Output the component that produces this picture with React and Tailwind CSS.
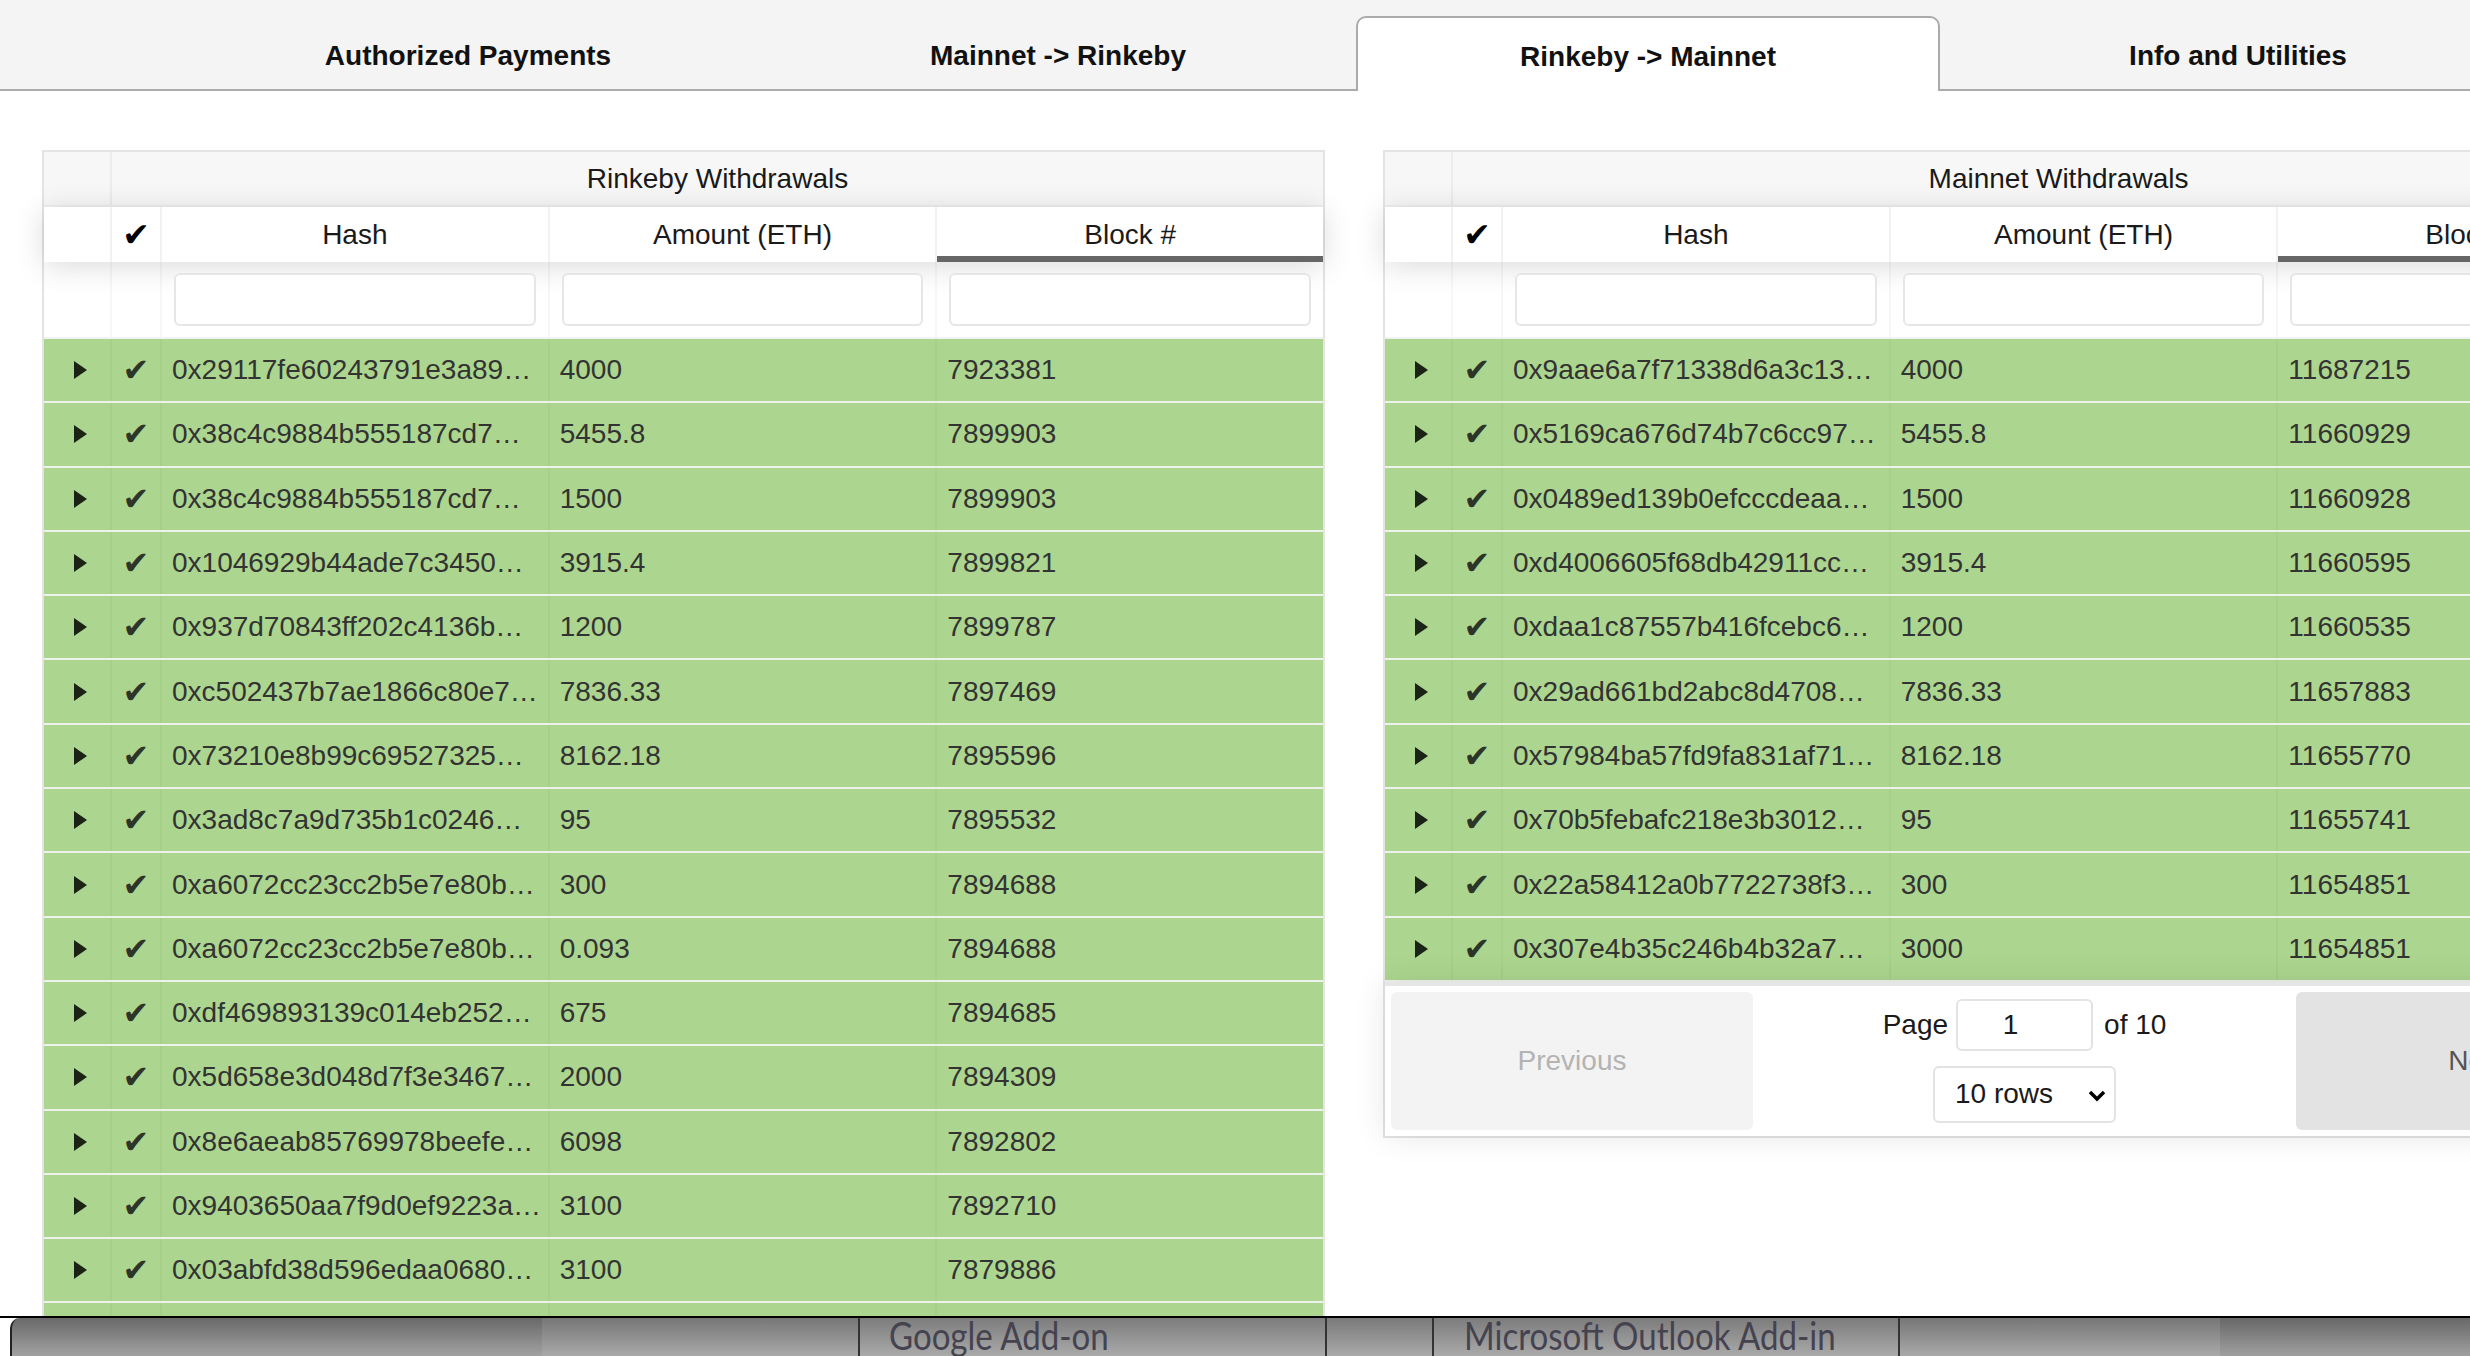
import { useState } from 'react';

const TABS = ['Authorized Payments', 'Mainnet -> Rinkeby', 'Rinkeby -> Mainnet', 'Info and Utilities'];

const rinkebyRows = [
  ['0x29117fe60243791e3a89…', '4000', '7923381'],
  ['0x38c4c9884b555187cd7…', '5455.8', '7899903'],
  ['0x38c4c9884b555187cd7…', '1500', '7899903'],
  ['0x1046929b44ade7c3450…', '3915.4', '7899821'],
  ['0x937d70843ff202c4136b…', '1200', '7899787'],
  ['0xc502437b7ae1866c80e7…', '7836.33', '7897469'],
  ['0x73210e8b99c69527325…', '8162.18', '7895596'],
  ['0x3ad8c7a9d735b1c0246…', '95', '7895532'],
  ['0xa6072cc23cc2b5e7e80b…', '300', '7894688'],
  ['0xa6072cc23cc2b5e7e80b…', '0.093', '7894688'],
  ['0xdf469893139c014eb252…', '675', '7894685'],
  ['0x5d658e3d048d7f3e3467…', '2000', '7894309'],
  ['0x8e6aeab85769978beefe…', '6098', '7892802'],
  ['0x9403650aa7f9d0ef9223a…', '3100', '7892710'],
  ['0x03abfd38d596edaa0680…', '3100', '7879886'],
  ['0x6b1f0e2d8a43c9e17d05…', '3000', '7879412'],
];

const mainnetRows = [
  ['0x9aae6a7f71338d6a3c13…', '4000', '11687215'],
  ['0x5169ca676d74b7c6cc97…', '5455.8', '11660929'],
  ['0x0489ed139b0efcccdeaa…', '1500', '11660928'],
  ['0xd4006605f68db42911cc…', '3915.4', '11660595'],
  ['0xdaa1c87557b416fcebc6…', '1200', '11660535'],
  ['0x29ad661bd2abc8d4708…', '7836.33', '11657883'],
  ['0x57984ba57fd9fa831af71…', '8162.18', '11655770'],
  ['0x70b5febafc218e3b3012…', '95', '11655741'],
  ['0x22a58412a0b7722738f3…', '300', '11654851'],
  ['0x307e4b35c246b4b32a7…', '3000', '11654851'],
];

function Check({ className }) {
  return <span className={`font-['DejaVu_Sans',sans-serif] leading-none ${className}`}>✔</span>;
}

function TabBar({ active, onSelect }) {
  return (
    <div className="h-[91px] bg-[#f4f4f4] border-b-2 border-[#ababab] flex items-end gap-[6px] pl-[176px]">
      {TABS.map((tab, i) =>
        i === active ? (
          <div
            key={tab}
            className="w-[584px] h-[75px] -mb-[2px] pt-[4px] shrink-0 bg-white border-2 border-b-0 border-[#ababab] rounded-t-[10px] flex items-center justify-center text-[28px] font-bold text-[#111]"
          >
            {tab}
          </div>
        ) : (
          <button
            key={tab}
            onClick={() => onSelect(i)}
            className="w-[584px] h-[73px] pt-[6px] shrink-0 flex items-center justify-center text-[28px] font-bold text-[#111]"
          >
            {tab}
          </button>
        )
      )}
    </div>
  );
}

function Pagination() {
  return (
    <div className="flex p-[6px] border-t-4 border-[#e6e6e6] shadow-[0_0_30px_0_rgba(0,0,0,0.1)]">
      <button className="flex-1 h-[138px] rounded-[6px] bg-[#f3f3f3] text-[#b3b3b3] text-[28px]">Previous</button>
      <div className="flex-[1.5] flex flex-col items-center justify-center gap-[15px] text-[28px] text-[#1a1a1a]">
        <div className="flex items-center">
          <span>Page</span>
          <input
            defaultValue="1"
            className="ml-[8px] mr-[11px] w-[137px] h-[52px] border-2 border-[#e3e3e3] rounded-[6px] text-center pr-[28px] outline-none"
          />
          <span>of 10</span>
        </div>
        <div className="relative">
          <select className="appearance-none w-[183px] h-[57px] border-2 border-[#e3e3e3] rounded-[6px] bg-white pl-[20px] text-[28px] outline-none">
            <option>10 rows</option>
            <option>20 rows</option>
          </select>
          <svg className="absolute right-[10px] top-[24px] w-[18px] h-[12px] pointer-events-none" viewBox="0 0 18 12">
            <polyline points="2,2 9,9 16,2" fill="none" stroke="#000" strokeWidth="3.5" />
          </svg>
        </div>
      </div>
      <button className="flex-1 h-[138px] rounded-[6px] bg-[#e3e3e3] text-[#555] text-[28px]">Next</button>
    </div>
  );
}

function WithdrawalTable({ title, rows, paginated }) {
  return (
    <div className="w-[1283px] shrink-0 self-start border-2 border-[#e4e4e4] bg-white flex flex-col">
      {/* column group header */}
      <div className="flex h-[55px] bg-[#f7f7f7] border-b-2 border-[#efefef] text-[28px] text-[#1a1a1a]">
        <div className="w-[68px] border-r-2 border-[#ececec]" />
        <div className="flex-1 flex items-center justify-center">{title}</div>
      </div>

      {/* column headers */}
      <div className="flex h-[55px] bg-white shadow-[0_4px_30px_0_rgba(0,0,0,0.15)] text-[28px] text-[#1a1a1a]">
        <div className="w-[68px] border-r-2 border-[#f2f2f2]" />
        <div className="w-[50px] border-r-2 border-[#f2f2f2] flex items-center justify-center">
          <Check className="text-[33px] text-black" />
        </div>
        <div className="flex-1 border-r-2 border-[#f2f2f2] flex items-center justify-center">Hash</div>
        <div className="flex-1 border-r-2 border-[#f2f2f2] flex items-center justify-center">Amount (ETH)</div>
        <div className="flex-1 flex items-center justify-center shadow-[inset_0_-6px_0_0_rgba(0,0,0,0.6)]">Block #</div>
      </div>

      {/* filters */}
      <div className="flex h-[77px] border-b-2 border-[#f2f2f2]">
        <div className="w-[68px] border-r-2 border-black/[0.03]" />
        <div className="w-[50px] border-r-2 border-black/[0.03]" />
        {[0, 1, 2].map((i) => (
          <div key={i} className="flex-1 flex items-center px-[12px] border-r-2 border-black/[0.03] last:border-r-0">
            <input className="w-full h-[53px] border-2 border-[#e6e6e6] rounded-[6px] bg-white outline-none" />
          </div>
        ))}
      </div>

      {rows.map(([hash, amount, block], i) => (
        <div key={i} className="flex h-[64.3px] bg-[#acd68f] border-b-2 border-[#eef2ec] text-[28px] text-[#333]">
          <div className="w-[68px] border-r-2 border-black/[0.03] flex items-center justify-center">
            <span className="w-0 h-0 ml-[6px] border-y-[9px] border-y-transparent border-l-[13px] border-l-[#1b2216]" />
          </div>
          <div className="w-[50px] border-r-2 border-black/[0.03] flex items-center justify-center">
            <Check className="text-[32px] text-[#2c3528]" />
          </div>
          <div className="flex-1 min-w-0 px-[10px] border-r-2 border-black/[0.03] flex items-center whitespace-nowrap">
            {hash}
          </div>
          <div className="flex-1 px-[10px] border-r-2 border-black/[0.03] flex items-center">{amount}</div>
          <div className="flex-1 px-[10px] flex items-center">{block}</div>
        </div>
      ))}

      {paginated && <Pagination />}
    </div>
  );
}

function AddonLabel({ children }) {
  return <span className="inline-block origin-left scale-x-[0.87] whitespace-nowrap">{children}</span>;
}

function AddonBar() {
  return (
    <div className="absolute inset-x-0 bottom-0 h-[40px] border-t-2 border-black bg-white flex overflow-hidden font-['Lato',sans-serif] text-[38px] leading-[38px] text-[#45434f]">
      <div className="ml-[10px] w-[532px] rounded-tl-[10px] border-l-2 border-[#222] bg-gradient-to-b from-[#696969] to-[#a2a2a2]" />
      <div className="w-[318px] border-r-2 border-[#333] bg-gradient-to-b from-[#777] to-[#a9a9a9]" />
      <div className="w-[467px] border-r-2 border-[#333] bg-gradient-to-b from-[#7a7a7a] to-[#aaa] pl-[29px] -mt-[2px]">
        <AddonLabel>Google Add-on</AddonLabel>
      </div>
      <div className="w-[107px] border-r-2 border-[#333] bg-gradient-to-b from-[#7a7a7a] to-[#aaa]" />
      <div className="w-[466px] border-r-2 border-[#333] bg-gradient-to-b from-[#7a7a7a] to-[#aaa] pl-[30px] -mt-[2px]">
        <AddonLabel>Microsoft Outlook Add-in</AddonLabel>
      </div>
      <div className="w-[320px] bg-gradient-to-b from-[#777] to-[#a9a9a9]" />
      <div className="flex-1 bg-gradient-to-b from-[#686868] to-[#a0a0a0]" />
    </div>
  );
}

export default function App() {
  const [active, setActive] = useState(2);

  return (
    <div className="relative w-[2470px] h-[1356px] overflow-hidden bg-white font-['Liberation_Sans',Arial,sans-serif]">
      <TabBar active={active} onSelect={setActive} />
      <div className="flex gap-[58px] pl-[42px] pt-[59px]">
        <WithdrawalTable title="Rinkeby Withdrawals" rows={rinkebyRows} />
        <WithdrawalTable title="Mainnet Withdrawals" rows={mainnetRows} paginated />
      </div>
      <AddonBar />
    </div>
  );
}
